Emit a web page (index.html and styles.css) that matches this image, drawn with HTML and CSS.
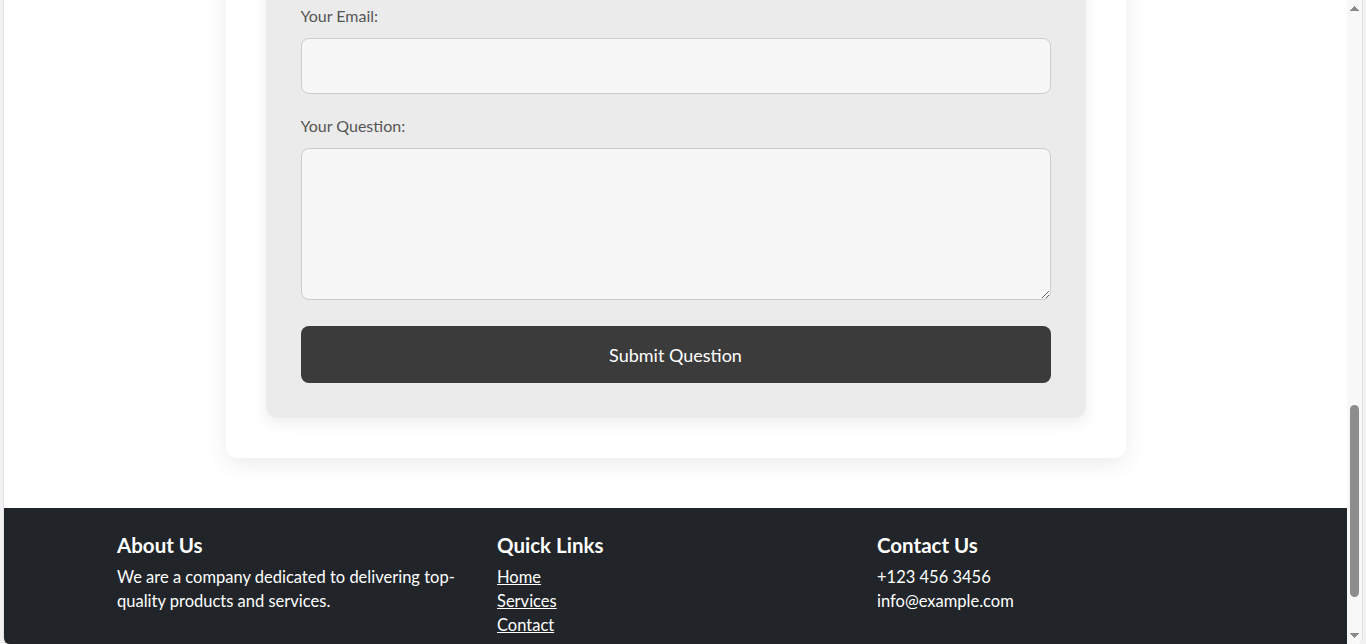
FILE: index.html
```html
<!DOCTYPE html>
<html lang="en">
<head>
<meta charset="utf-8">
<title>Ask a Question</title>
<link rel="stylesheet" href="styles.css">
</head>
<body>
<div class="frame">
  <div class="viewport">
    <div class="page">
      <main class="main">
        <section class="card">
          <form class="form-box">
            <label class="field-label" for="email">Your Email:</label>
            <input class="field-input" id="email" type="email">
            <label class="field-label" for="question">Your Question:</label>
            <textarea class="field-area" id="question"></textarea>
            <button class="submit-btn" type="button">Submit Question</button>
          </form>
        </section>
      </main>
      <footer class="footer">
        <div class="container">
          <div class="footer-col">
            <h5 class="footer-title">About Us</h5>
            <p class="footer-text">We are a company dedicated to delivering top-quality products and services.</p>
          </div>
          <div class="footer-col">
            <h5 class="footer-title">Quick Links</h5>
            <ul class="footer-list">
              <li><a class="footer-link" href="#">Home</a></li>
              <li><a class="footer-link" href="#">Services</a></li>
              <li><a class="footer-link" href="#">Contact</a></li>
            </ul>
          </div>
          <div class="footer-col">
            <h5 class="footer-title">Contact Us</h5>
            <p class="footer-text">+123 456 3456<br>info@example.com</p>
          </div>
        </div>
      </footer>
    </div>
  </div>
  <div class="scrollbar">
    <div class="sb-btn sb-up"></div>
    <div class="sb-track"><div class="sb-thumb" style="margin-top:388px;height:192px"></div></div>
    <div class="sb-btn sb-down"></div>
  </div>
</div>
</body>
</html>
```

FILE: styles.css
```css
* { box-sizing: border-box; }

html, body {
  margin: 0;
  height: 644px;
  overflow: hidden;
}

body {
  background: #f1f1f1;
  font-family: Lato, "Liberation Sans", sans-serif;
  font-size: 16px;
}

.frame {
  display: flex;
  height: 644px;
  margin: 0 3px;
  border-left: 1px solid #e1e1e1;
  border-right: 1px solid #e1e1e1;
  border-radius: 0 0 6px 6px;
  overflow: hidden;
  background: #ffffff;
}

.viewport {
  flex: 1;
  display: flex;
  flex-direction: column;
  justify-content: flex-end;
  overflow: hidden;
}

.page {
  flex-shrink: 0;
}

.main {
  padding: 40px 0 50px;
}

.card {
  width: 900px;
  margin: 0 auto;
  padding: 40px;
  background: #ffffff;
  border-radius: 12px;
  box-shadow: 0 6px 22px rgba(0, 0, 0, 0.08);
}

.form-box {
  display: block;
  padding: 35px;
  background: #ebebeb;
  border-radius: 12px;
  box-shadow: 0 5px 16px rgba(0, 0, 0, 0.07);
}

.field-label {
  display: block;
  margin-bottom: 10px;
  color: #555;
  font-size: 16px;
  line-height: 24px;
}

.field-input {
  display: block;
  width: 100%;
  height: 56px;
  margin: 0 0 20px;
  padding: 10px 14px;
  background: #f7f7f7;
  border: 1px solid #cccccc;
  border-radius: 8px;
  font: inherit;
}

.field-area {
  display: block;
  width: 100%;
  height: 152px;
  margin: 0 0 26px;
  padding: 10px 14px;
  background: #f7f7f7;
  border: 1px solid #cccccc;
  border-radius: 8px;
  font: inherit;
}

.submit-btn {
  display: block;
  width: 100%;
  height: 57px;
  padding: 0;
  background: #3b3b3b;
  color: #ffffff;
  border: none;
  border-radius: 8px;
  font-family: inherit;
  font-size: 18px;
}

.footer {
  background: #212529;
  color: #ffffff;
  padding: 25px 7px 7px 0;
}

.container {
  width: 1140px;
  margin: 0 auto;
  display: grid;
  grid-template-columns: repeat(3, 1fr);
}

.footer-col {
  padding: 0 15px;
}

.footer-title {
  margin: 0 0 8px;
  font-size: 20.5px;
  font-weight: 700;
  line-height: 24px;
}

.footer-text {
  margin: 0;
  line-height: 24px;
  font-size: 16.5px;
}

.footer-list {
  list-style: none;
  margin: 0;
  padding: 0;
  line-height: 24px;
  font-size: 16.5px;
}

.footer-link {
  color: #ffffff;
  text-decoration: underline;
}

.scrollbar {
  width: 15px;
  flex-shrink: 0;
  display: flex;
  flex-direction: column;
  background: #f8f8f8;
}

.sb-btn {
  height: 17px;
  flex-shrink: 0;
}

.sb-up {
  background: conic-gradient(from 138deg at 50% 0%, #8a8a8a 84deg, transparent 0) center / 9px 5px no-repeat;
}

.sb-down {
  background: conic-gradient(from -42deg at 50% 100%, #8a8a8a 84deg, transparent 0) center / 9px 5px no-repeat;
}

.sb-track {
  flex: 1;
}

.sb-thumb {
  width: 9px;
  margin-left: 3px;
  background: #8d8d8d;
  border-radius: 5px;
}
```
